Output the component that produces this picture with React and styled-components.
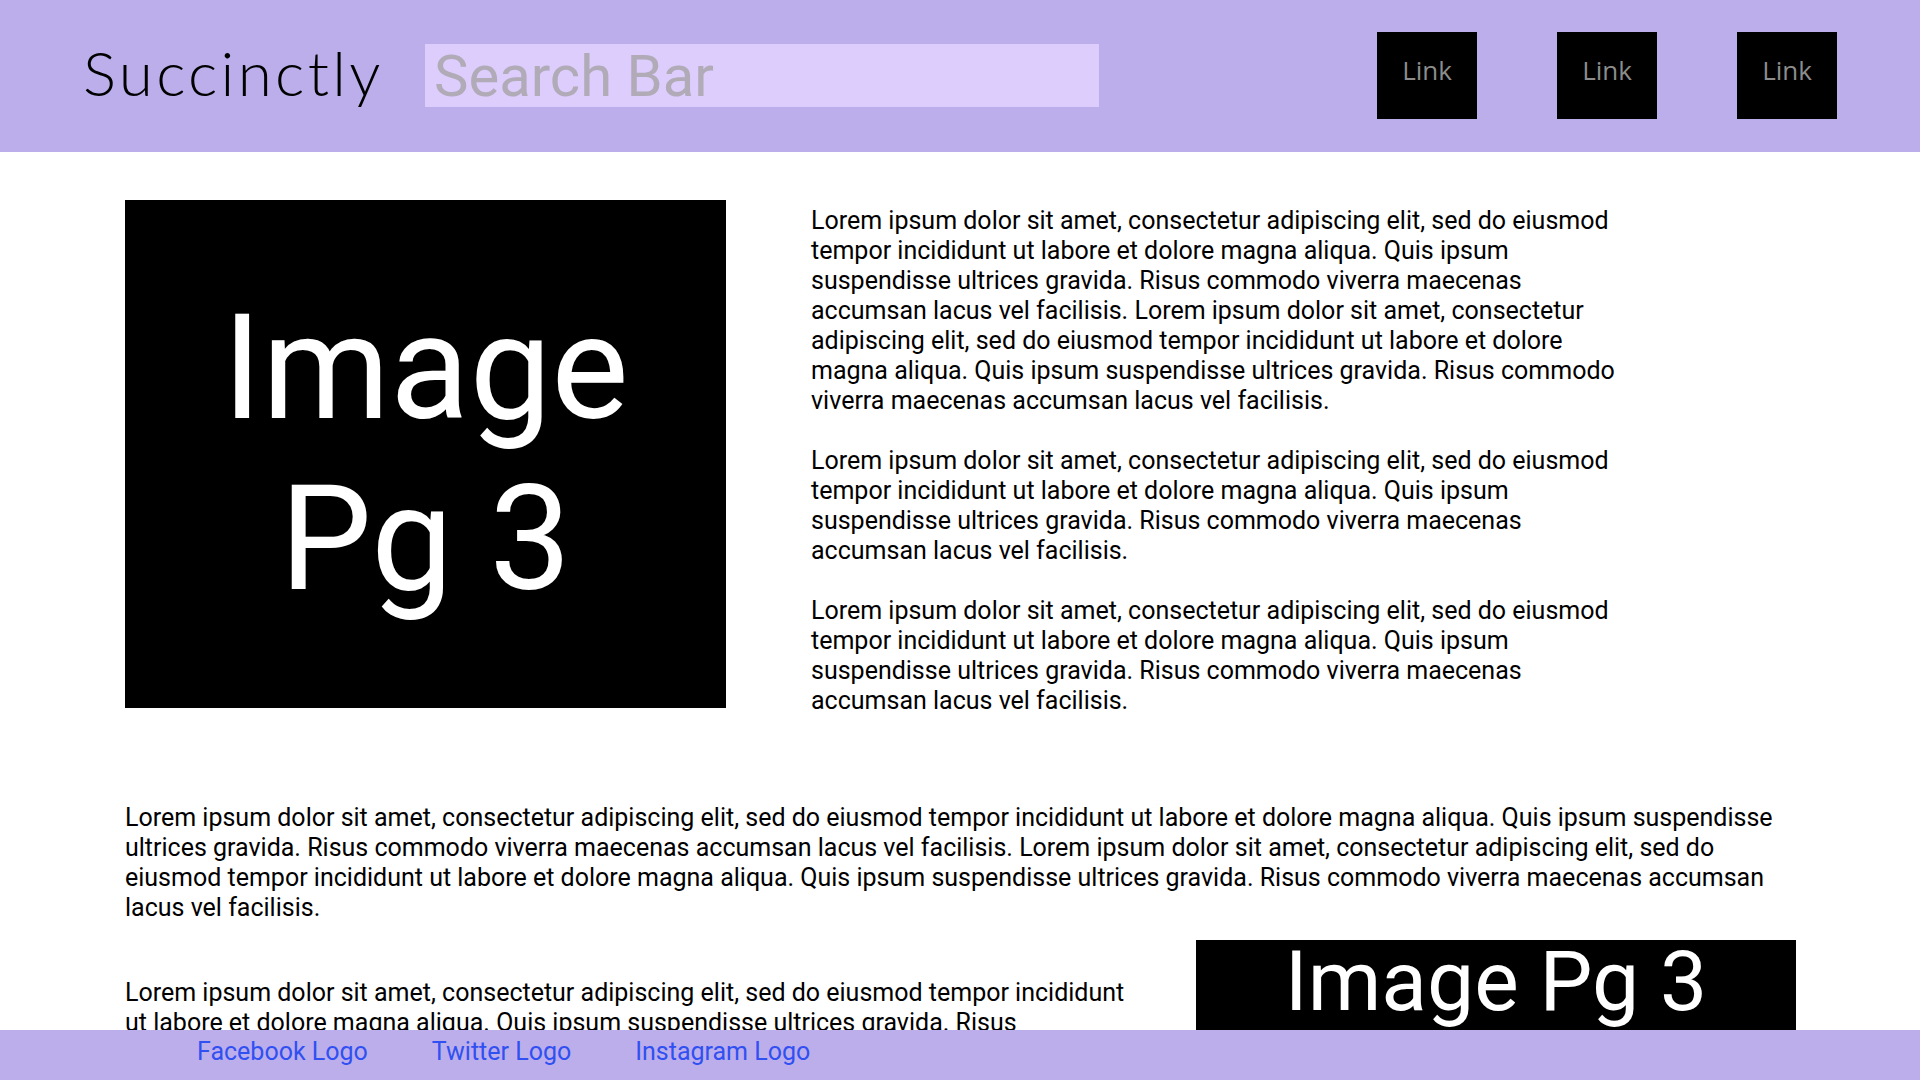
import React from "react";
import styled, { createGlobalStyle } from "styled-components";

const Global = createGlobalStyle`
  html, body { margin: 0; padding: 0; overflow: hidden; background: #ffffff; }
  body { font-family: Roboto, "Liberation Sans", sans-serif; color: #000; }
  * { box-sizing: border-box; }
`;

const LAV = "#bcaeea";

const Page = styled.div`
  width: 1920px;
  height: 1080px;
  overflow: hidden;
`;

const Header = styled.header`
  height: 152px;
  background: ${LAV};
  display: flex;
  align-items: center;
  padding: 0 83px;
`;

const Logo = styled.div`
  flex: none;
  width: 297px;
  white-space: nowrap;
  font-family: Lato, "Open Sans", sans-serif;
  font-weight: 300;
  font-size: 62px;
  letter-spacing: 3.3px;
  color: #000;
  margin-top: -8px;
`;

const Search = styled.input`
  margin-left: 45px;
  width: 674px;
  height: 63px;
  margin-top: -1px;
  border: none;
  outline: none;
  background: #ddcdfd;
  padding: 0 9px;
  font-family: Roboto, sans-serif;
  font-size: 58px;
  color: #333;
  &::placeholder { color: #b1abb8; }
`;

const Nav = styled.nav`
  margin-left: auto;
  display: flex;
  gap: 80px;
  align-self: flex-start;
  margin-top: 32px;
`;

const NavLink = styled.a`
  display: block;
  width: 100px;
  height: 87px;
  background: #000;
  color: #8c8c8c;
  font-family: "Open Sans", sans-serif;
  font-size: 26px;
  text-align: center;
  padding-top: 20px;
  text-decoration: none;
`;

const Main = styled.main`
  padding: 0 125px;
`;

const TopRow = styled.section`
  display: flex;
  align-items: flex-start;
  height: 508px;
  margin-top: 48px;
`;

const ImageBox = styled.div`
  flex: none;
  width: ${(p) => p.$w || 601}px;
  height: 508px;
  background: #000;
  color: #fff;
  display: flex;
  align-items: ${(p) => (p.$top ? "flex-start" : "center")};
  justify-content: center;
  text-align: center;
  font-size: ${(p) => p.$size}px;
  line-height: ${(p) => (p.$top ? 1 : "normal")};
  font-family: Roboto, sans-serif;
`;

const TextCol = styled.div`
  width: ${(p) => p.$w}px;
  margin-left: ${(p) => p.$ml || 0}px;
  padding-top: ${(p) => p.$pt || 0}px;
`;

const P = styled.p`
  margin: 0 0 30px 0;
  font-size: 25px;
  line-height: 30px;
  &:last-child { margin-bottom: 0; }
`;

const Wide = styled.p`
  margin: 95px 0 0 0;
  font-size: 25px;
  line-height: 30px;
  width: 1670px;
`;

const BottomRow = styled.section`
  display: flex;
  justify-content: space-between;
  margin-top: 17px;
  width: 1671px;
`;

const Footer = styled.footer`
  position: fixed;
  left: 0;
  right: 0;
  bottom: 0;
  height: 50px;
  background: ${LAV};
  display: flex;
  align-items: center;
  padding: 0 0 7px 197px;
  gap: 64px;
`;

const FootLink = styled.a`
  color: #3050f2;
  font-family: Roboto, sans-serif;
  font-size: 25px;
  text-decoration: none;
`;

const lorem =
  "Lorem ipsum dolor sit amet, consectetur adipiscing elit, sed do eiusmod tempor incididunt ut labore et dolore magna aliqua. Quis ipsum suspendisse ultrices gravida. Risus commodo viverra maecenas accumsan lacus vel facilisis.";

export default function App() {
  return (
    <Page>
      <Global />
      <Header>
        <Logo>Succinctly</Logo>
        <Search placeholder="Search Bar" />
        <Nav>
          <NavLink href="#">Link</NavLink>
          <NavLink href="#">Link</NavLink>
          <NavLink href="#">Link</NavLink>
        </Nav>
      </Header>
      <Main>
        <TopRow>
          <ImageBox $size={146}>
            Image
            <br />
            Pg 3
          </ImageBox>
          <TextCol $w={815} $ml={85} $pt={6}>
            <P>{lorem + " " + lorem}</P>
            <P>{lorem}</P>
            <P>{lorem}</P>
          </TextCol>
        </TopRow>
        <Wide>{lorem + " " + lorem}</Wide>
        <BottomRow>
          <TextCol $w={1010} $pt={38}>
            <P>{lorem + " " + lorem}</P>
          </TextCol>
          <ImageBox $size={84} $w={600} $top>
            Image Pg 3
          </ImageBox>
        </BottomRow>
      </Main>
      <Footer>
        <FootLink href="#">Facebook Logo</FootLink>
        <FootLink href="#">Twitter Logo</FootLink>
        <FootLink href="#">Instagram Logo</FootLink>
      </Footer>
    </Page>
  );
}
